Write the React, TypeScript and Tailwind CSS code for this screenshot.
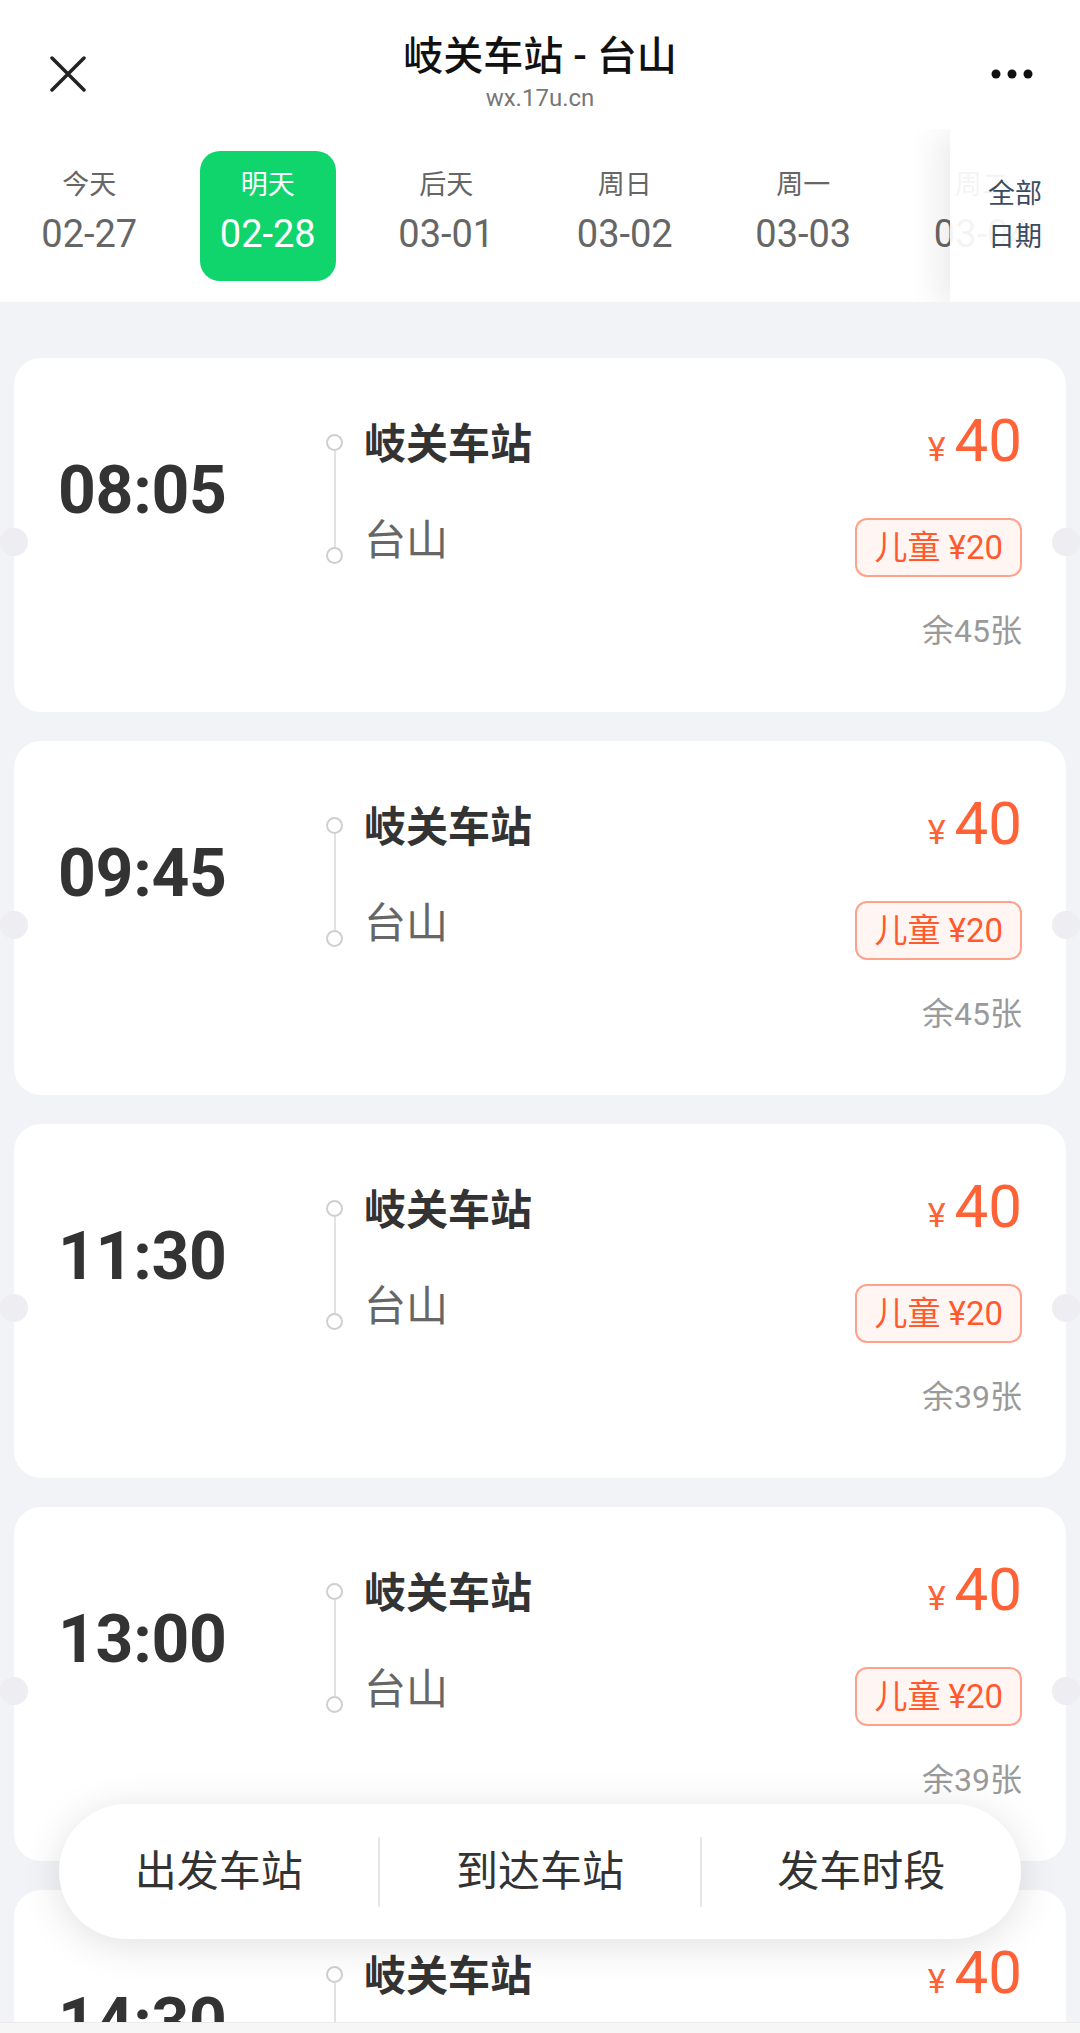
import React from "react";

const tabs = [
  { label: "今天", date: "02-27" },
  { label: "明天", date: "02-28", active: true },
  { label: "后天", date: "03-01" },
  { label: "周日", date: "03-02" },
  { label: "周一", date: "03-03" },
  { label: "周二", date: "03-04" },
  { label: "周三", date: "03-05" },
];

const trips = [
  { time: "08:05", left: "余45张" },
  { time: "09:45", left: "余45张" },
  { time: "11:30", left: "余39张" },
  { time: "13:00", left: "余39张" },
  { time: "14:30", left: "余39张" },
];

function Card({ time, left }: { time: string; left: string }) {
  return (
    <div className="relative h-[354px] shrink-0 rounded-[27px] bg-white">
      <div className="absolute left-[-14px] top-[170px] h-[28px] w-[28px] rounded-full bg-[#ededf2]" />
      <div className="absolute right-[-14px] top-[170px] h-[28px] w-[28px] rounded-full bg-[#ededf2]" />
      <div className="flex h-full pl-[44px] pr-[44px]">
        <div className="w-[268px] pt-[93px] font-[Roboto,sans-serif] text-[66px] font-bold leading-[80px] tracking-[-0.3px] text-[#333]">
          {time}
        </div>
        <div className="flex w-[17px] flex-col items-center pt-[76px]">
          <div className="h-[17px] w-[17px] rounded-full border-2 border-[#cfcfcf] bg-white" />
          <div className="h-[96px] w-[2px] bg-[#e2e2e2]" />
          <div className="h-[17px] w-[17px] rounded-full border-2 border-[#cfcfcf] bg-white" />
        </div>
        <div className="ml-[21px] flex flex-col pt-[63px]">
          <div className="text-[42px] font-semibold leading-[48px] text-[#333]">岐关车站</div>
          <div className="mt-[48px] text-[42px] leading-[48px] text-[#666]">台山</div>
        </div>
        <div className="ml-auto flex flex-col items-end pt-[48px]">
          <div className="h-[70px] whitespace-nowrap font-[Roboto,sans-serif] text-[60px] leading-[70px] text-[#ff6236]">
            <span className="mr-[9px] text-[34px]">¥</span>40
          </div>
          <div className="mt-[42px] flex h-[59px] items-center whitespace-nowrap rounded-[12px] border-2 border-[#ffa28c] bg-[#fff6f3] px-[17px] text-[33px] text-[#ff5a2e]">
            儿童 ¥20
          </div>
          <div className="mt-[34px] whitespace-nowrap text-[32px] leading-[40px] text-[#9a9a9a]">{left}</div>
        </div>
      </div>
    </div>
  );
}

export default function App() {
  return (
    <div className="relative h-[2033px] w-[1080px] overflow-hidden bg-[#f2f3f7] font-[Roboto,'Noto_Sans_CJK_SC',sans-serif]">
      {/* header */}
      <div className="bg-white">
        <div className="grid h-[129px] grid-cols-[1fr_auto_1fr]">
          <div className="pl-[50px] pt-[56px]">
            <svg width="36" height="36" viewBox="0 0 36 36">
              <path d="M2 2 L34 34 M34 2 L2 34" stroke="#222" strokeWidth="3.5" strokeLinecap="round" />
            </svg>
          </div>
          <div className="flex flex-col items-center pt-[33px]">
            <div className="text-[40px] font-medium leading-[48px] text-[#111]">岐关车站 - 台山</div>
            <div className="mt-[3px] text-[24px] leading-[28px] text-[#777]">wx.17u.cn</div>
          </div>
          <div className="flex justify-end pr-[47px] pt-[69px]">
            <svg width="42" height="10" viewBox="0 0 42 10">
              <circle cx="5" cy="5" r="4.5" fill="#111" />
              <circle cx="21" cy="5" r="4.5" fill="#111" />
              <circle cx="37" cy="5" r="4.5" fill="#111" />
            </svg>
          </div>
        </div>
        <div className="relative flex h-[173px] overflow-hidden">
          {tabs.map((t) => (
            <div key={t.date} className="flex h-full w-[178.5px] shrink-0 items-center justify-center">
              <div
                className={
                  t.active
                    ? "flex h-[130px] w-[136px] flex-col items-center rounded-[20px] bg-[#10d56c] pt-[18px] text-white"
                    : "flex h-[130px] w-[136px] flex-col items-center pt-[18px] text-[#666]"
                }
              >
                <div className="text-[27px] leading-[32px]">{t.label}</div>
                <div className="mt-[11px] text-[38px] leading-[44px]">{t.date}</div>
              </div>
            </div>
          ))}
          <div className="absolute right-0 top-0 flex h-full w-[130px] flex-col items-center justify-center bg-white/[0.93] shadow-[-14px_4px_30px_rgba(0,0,0,0.07)]">
            <div className="text-[27px] leading-[40px] text-[#3b4c62]">全部</div>
            <div className="mt-[3px] text-[27px] leading-[40px] text-[#3b4c62]">日期</div>
          </div>
        </div>
      </div>

      {/* list */}
      <div className="flex flex-col gap-[29px] px-[14px] pt-[56px]">
        {trips.map((t) => (
          <Card key={t.time} time={t.time} left={t.left} />
        ))}
      </div>

      {/* filter bar */}
      <div className="absolute left-[59px] top-[1804px] flex h-[135px] w-[962px] items-center rounded-full bg-white shadow-[0_6px_40px_rgba(0,0,0,0.12)]">
        <div className="flex flex-1 justify-center text-[42px] leading-[50px] text-[#333]">出发车站</div>
        <div className="h-[70px] w-[2px] bg-[#e6e6e6]" />
        <div className="flex flex-1 justify-center text-[42px] leading-[50px] text-[#333]">到达车站</div>
        <div className="h-[70px] w-[2px] bg-[#e6e6e6]" />
        <div className="flex flex-1 justify-center text-[42px] leading-[50px] text-[#333]">发车时段</div>
      </div>

      {/* bottom strip */}
      <div className="absolute bottom-0 left-0 h-[11px] w-full border-t border-[#ebebeb] bg-[#f6f6f6]" />
    </div>
  );
}
